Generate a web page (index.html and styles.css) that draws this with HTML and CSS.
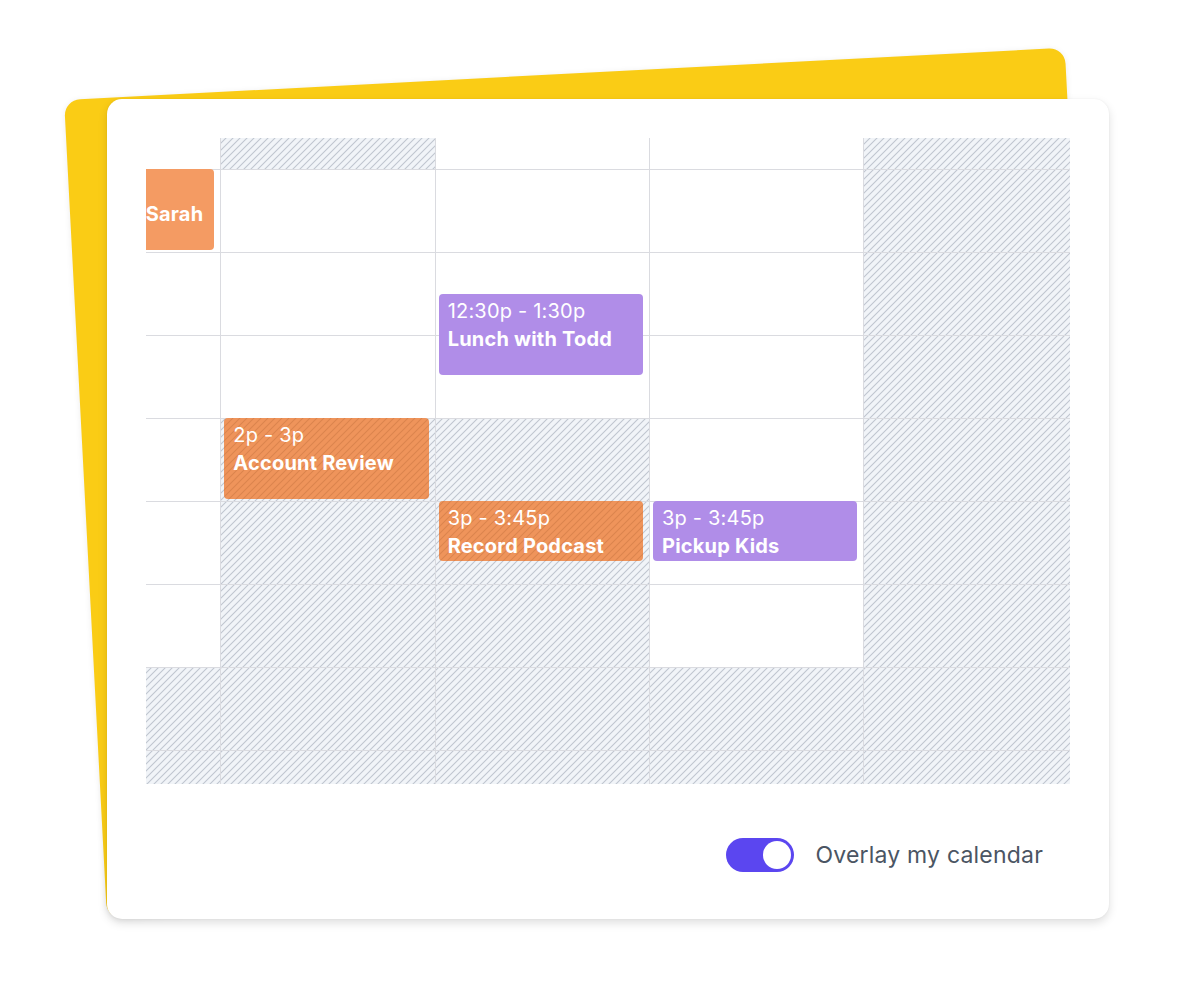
FILE: index.html
```html
<!DOCTYPE html>
<html lang="en">
<head>
<meta charset="utf-8">
<title>Calendar overlay</title>
<link rel="stylesheet" href="styles.css">
</head>
<body>
<div class="stage">
  <div class="frame">
    <div class="backdrop"></div>
    <div class="card">
      <div class="viewport">
        <div class="week">
          <div class="day">
            <div class="cell"></div><div class="cell"></div><div class="cell"></div><div class="cell"></div><div class="cell"></div><div class="cell"></div><div class="cell"></div><div class="cell off"></div><div class="cell off"></div>
            <div class="event theirs lead" style="top:83px;height:81px"><span class="time">11a - 12p</span><span class="title">Coffee with Sarah</span></div>
          </div>
          <div class="day">
            <div class="cell off"></div><div class="cell"></div><div class="cell"></div><div class="cell"></div><div class="cell off"></div><div class="cell off"></div><div class="cell off"></div><div class="cell off"></div><div class="cell off"></div>
            <div class="event theirs busy" style="top:332px;height:81px"><span class="time">2p - 3p</span><span class="title">Account Review</span></div>
          </div>
          <div class="day">
            <div class="cell"></div><div class="cell"></div><div class="cell"></div><div class="cell"></div><div class="cell off"></div><div class="cell off"></div><div class="cell off"></div><div class="cell off"></div><div class="cell off"></div>
            <div class="event mine" style="top:207.5px;height:81px"><span class="time">12:30p - 1:30p</span><span class="title">Lunch with Todd</span></div>
            <div class="event theirs busy" style="top:415px;height:60px"><span class="time">3p - 3:45p</span><span class="title">Record Podcast</span></div>
          </div>
          <div class="day">
            <div class="cell"></div><div class="cell"></div><div class="cell"></div><div class="cell"></div><div class="cell"></div><div class="cell"></div><div class="cell"></div><div class="cell off"></div><div class="cell off"></div>
            <div class="event mine" style="top:415px;height:60px"><span class="time">3p - 3:45p</span><span class="title">Pickup Kids</span></div>
          </div>
          <div class="day">
            <div class="cell off"></div><div class="cell off"></div><div class="cell off"></div><div class="cell off"></div><div class="cell off"></div><div class="cell off"></div><div class="cell off"></div><div class="cell off"></div><div class="cell off"></div>
          </div>
        </div>
      </div>
      <div class="footer">
        <span class="toggle" role="switch" aria-checked="true"><span class="knob"></span></span>
        <span class="label">Overlay my calendar</span>
      </div>
    </div>
  </div>
</div>
</body>
</html>
```
FILE: styles.css
```css
* { box-sizing: border-box; }

html, body {
  margin: 0;
  background: #ffffff;
}

body {
  font-family: "Inter", "Noto Sans", "Liberation Sans", sans-serif;
  width: 1200px;
  height: 992px;
  overflow: hidden;
}

.stage {
  padding: 99px 0 0 107px;
}

.frame {
  position: relative;
  width: 1002px;
  height: 820px;
}

.backdrop {
  position: absolute;
  inset: 0;
  background: #facc15;
  border-radius: 16px;
  transform-origin: 0 100%;
  transform: rotate(-3deg);
  box-shadow: 0 1px 6px rgba(0, 0, 0, 0.08);
}

.card {
  position: relative;
  height: 100%;
  background: #ffffff;
  border-radius: 15px;
  padding: 39px 39px 0;
  box-shadow: 0 4px 10px rgba(0, 0, 0, 0.13), 0 0 2px rgba(0, 0, 0, 0.06);
}

.viewport {
  width: 924px;
  height: 646px;
  overflow: hidden;
}

.week {
  display: grid;
  grid-template-columns: repeat(5, 214.34px);
  margin-left: -140px;
  margin-top: -52px;
}

.day {
  position: relative;
  border-left: 1px solid #dadbe0;
}

.cell {
  height: 83px;
  border-top: 1px solid #dadbe0;
  background: #ffffff;
}

.cell.off {
  background-color: #f1f4f8;
  background-image: url("data:image/svg+xml,%3Csvg xmlns='http://www.w3.org/2000/svg' width='7' height='7'%3E%3Cpath d='M-1 8L8 -1M-1 1L1 -1M6 8L8 6' stroke='rgb(192,198,207)' stroke-width='1.1'/%3E%3C/svg%3E");
  background-size: 7px 7px;
  background-attachment: fixed;
}

.event {
  position: absolute;
  left: 3px;
  right: 6px;
  border-radius: 4px;
  padding: 3px 9px 0;
  color: #ffffff;
  display: flex;
  flex-direction: column;
  font-size: 20px;
  line-height: 28px;
  letter-spacing: 0.2px;
  white-space: nowrap;
  overflow: hidden;
}

.event.lead { left: 10px; }

.event.theirs { background-color: #f49b63; }

.event.busy {
  background-color: #ef945b;
  background-image: url("data:image/svg+xml,%3Csvg xmlns='http://www.w3.org/2000/svg' width='7' height='7'%3E%3Cpath d='M-1 8L8 -1M-1 1L1 -1M6 8L8 6' stroke='rgb(196,110,60)' stroke-opacity='0.45' stroke-width='1.1'/%3E%3C/svg%3E");
  background-size: 7px 7px;
  background-attachment: fixed;
}

.event.mine { background-color: #b08de8; }

.time { font-weight: 400; }
.title { font-weight: 700; }

.footer {
  display: flex;
  justify-content: flex-end;
  align-items: center;
  gap: 21px;
  margin-top: 54px;
  padding-right: 27px;
}

.toggle {
  display: flex;
  justify-content: flex-end;
  align-items: center;
  width: 68px;
  height: 34px;
  padding: 0 3px;
  border-radius: 17px;
  background: #5b46f0;
}

.knob {
  width: 28px;
  height: 28px;
  border-radius: 50%;
  background: #ffffff;
}

.label {
  font-size: 23px;
  letter-spacing: 0.2px;
  color: #4b5563;
}
```
